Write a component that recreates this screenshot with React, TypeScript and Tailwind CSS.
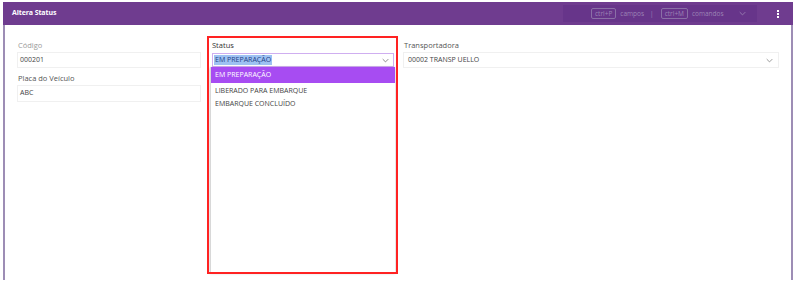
import React from "react";

const Chevron = ({ className = "" }: { className?: string }) => (
  <svg viewBox="0 0 10 6" className={className} width="7" height="5" fill="none" stroke="currentColor" strokeWidth="1.2">
    <path d="M1 1l4 4 4-4" />
  </svg>
);

export default function App() {
  return (
    <div className="relative w-[795px] h-[296px] bg-white overflow-hidden" style={{ fontFamily: '"Open Sans", "Noto Sans", sans-serif' }}>
      <div className="ml-[3px] mt-[2px] w-[790px] flex flex-col">
        {/* header */}
        <div className="h-[23px] bg-[#6f3c8f] flex items-center pl-[9px] pr-[14px]">
          <span className="text-white font-bold text-[7px] tracking-[-0.1px]">Altera Status</span>
          <div className="ml-auto flex items-center h-[17px] w-[194px] bg-[#67358a] pl-[28px] text-[#9c84b5] text-[6.5px]">
            <span className="border border-[#8a6fa6] rounded-[2px] px-[3px] h-[11px] flex items-center">ctrl+P</span>
            <span className="ml-[4px]">campos</span>
            <span className="ml-[6px]">|</span>
            <span className="ml-[7px] border border-[#8a6fa6] rounded-[2px] px-[3px] h-[11px] flex items-center">ctrl+M</span>
            <span className="ml-[4px]">comandos</span>
            <Chevron className="ml-[15px] text-[#9c84b5]" />
          </div>
          <div className="ml-[20px] flex flex-col gap-[1px]">
            <div className="w-[2px] h-[2px] bg-white" />
            <div className="w-[2px] h-[2px] bg-white" />
            <div className="w-[2px] h-[2px] bg-white" />
          </div>
        </div>
        {/* body */}
        <div className="h-[255px] border-x-[2px] border-[#9d8db5] flex pt-[15px] pl-[12px] text-[7px]">
          <div className="w-[184px] flex flex-col">
            <div className="h-[11px] text-[#9a9a9a] text-[7.5px] leading-[11px] pl-[1px]">Código</div>
            <div className="mt-[1px] h-[16px] border border-[#f0f0f0] flex items-center pl-[2px] text-[#444]">000201</div>
            <div className="mt-[5px] h-[11px] text-[#555] text-[7.5px] leading-[11px] pl-[1px]">Placa do Veículo</div>
            <div className="mt-[1px] h-[17px] border border-[#f0f0f0] flex items-center pl-[2px] text-[#444]">ABC</div>
          </div>
          <div className="ml-[11px] w-[182px] flex flex-col relative">
            <div className="h-[11px] text-[#333] text-[7.5px] leading-[11px]">Status</div>
            <div className="mt-[2px] h-[14px] border border-[#cfaef0] flex items-center pl-[1px] pr-[4px]">
              <span className="bg-[#9dc1f2] text-[#1f3f86] px-[1px] leading-[10px]">EM PREPARAÇÃO</span>
              <Chevron className="ml-auto text-[#777]" />
            </div>
          </div>
          <div className="ml-[9px] w-[376px] flex flex-col">
            <div className="h-[11px] text-[#555] text-[7.5px] leading-[11px] pl-[1px]">Transportadora</div>
            <div className="mt-[1px] h-[16px] border border-[#f0f0f0] flex items-center pl-[4px] pr-[5px] text-[#444]">
              <span>00002 TRANSP UELLO</span>
              <Chevron className="ml-auto text-[#888]" />
            </div>
          </div>
        </div>
      </div>

      {/* dropdown */}
      <div className="absolute left-[210px] top-[67px] w-[185px] h-[205px] bg-white border-l border-[#d8d8d8] shadow-[0_1px_3px_rgba(0,0,0,0.25)] text-[7px] text-[#444]">
        <div className="h-[16px] bg-[#a74cf2] text-white flex items-center pl-[4px]">EM PREPARAÇÃO</div>
        <div className="h-[14px] flex items-center pl-[4px] mt-[1px]">LIBERADO PARA EMBARQUE</div>
        <div className="h-[13px] flex items-center pl-[4px]">EMBARQUE CONCLUÍDO</div>
      </div>

      {/* annotation */}
      <div className="absolute left-[207px] top-[36px] w-[191px] h-[238px] border-[2px] border-[#ff2222] pointer-events-none" />
    </div>
  );
}
